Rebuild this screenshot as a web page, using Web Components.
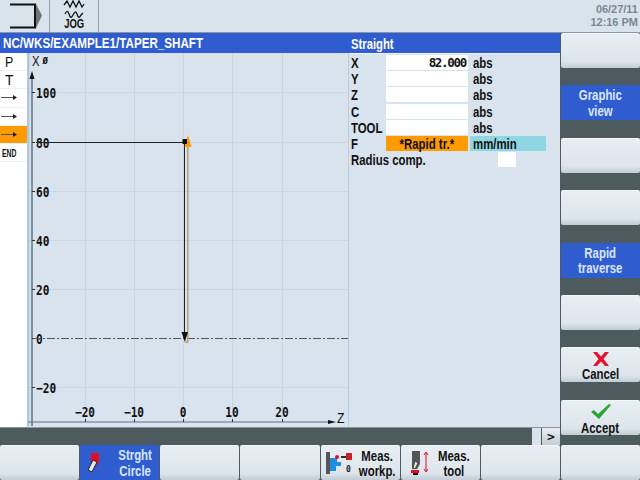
<!DOCTYPE html>
<html>
<head>
<meta charset="utf-8">
<style>
  html, body { margin: 0; padding: 0; width: 640px; height: 480px; overflow: hidden; background: #4d5a5e; }
  body { font: bold 15px "Liberation Sans", sans-serif; color: #111; }
</style>
</head>
<body>
<hmi-screen>
  <hmi-header slot="header"></hmi-header>
  <span slot="title">NC/WKS/EXAMPLE1/TAPER_SHAFT</span>
  <span slot="formtitle">Straight</span>
  <program-list slot="list"></program-list>
  <path-graph slot="graph"></path-graph>
  <straight-form slot="form"></straight-form>

  <soft-key slot="side"></soft-key>
  <soft-key slot="side" active>Graphic<br>view</soft-key>
  <soft-key slot="side"></soft-key>
  <soft-key slot="side"></soft-key>
  <soft-key slot="side" active>Rapid<br>traverse</soft-key>
  <soft-key slot="side"></soft-key>
  <soft-key slot="side" stacked style="--pt:4px;--g:1px">
    <svg slot="icon" width="16" height="14" viewBox="0 0 16 14"><path d="M0 0h4l4 4.500L12 0h4l-5.500 7L16 14h-4L8 9.500 4 14H0l5.500-7z" fill="#e8112d"/></svg>
    Cancel
  </soft-key>
  <soft-key slot="side" stacked style="--pt:3px;--g:2px">
    <svg slot="icon" width="20" height="15" viewBox="0 0 20 15"><path d="M0 8l3-2 4 4L18 0l2 1L8 15z" fill="#27a832"/></svg>
    Accept
  </soft-key>

  <soft-key slot="bottom"></soft-key>
  <soft-key slot="bottom" active iconed style="--pl:8px;--g:13px">
    <svg slot="icon" width="12" height="20" viewBox="0 0 12 20"><path d="M3 0h8v9l-2 3H3z" fill="#e01020"/><path d="M5 7l4 2-5 10-4-2z" fill="#e8e8e8" stroke="#222"/></svg>
    Strght<br>Circle
  </soft-key>
  <soft-key slot="bottom"></soft-key>
  <soft-key slot="bottom"></soft-key>
  <soft-key slot="bottom" iconed style="--pl:5px;--g:-5px">
    <svg slot="icon" width="27" height="24" viewBox="0 0 27 24"><rect x="0" y="1" width="4" height="22" fill="#555"/><path d="M4 7h7v4h4v4h-5v5H4z" fill="#1e8fe0"/><circle cx="11" cy="6" r="2" fill="#e01020"/><rect x="15" y="5" width="5" height="2" fill="#333"/><rect x="20" y="2" width="6" height="7" fill="#c8202a"/><text x="20" y="21" font-size="8" font-family="DejaVu Sans Mono" fill="#222">0</text></svg>
    Meas.<br>workp.
  </soft-key>
  <soft-key slot="bottom" iconed style="--pl:9px;--g:1px">
    <svg slot="icon" width="22" height="26" viewBox="0 0 22 26"><path d="M2 1h8v13l-3 5H2z" fill="#555"/><path d="M5 11l3 2-3 6-2-1z" fill="#e8e8e8" stroke="#222" stroke-width=".7"/><rect x="1" y="20" width="8" height="3" fill="#e01020"/><rect x="3" y="23" width="5" height="2" fill="#111"/><path d="M16 3v18M14 5l2-3 2 3M14 19l2 3 2-3" fill="none" stroke="#e01020"/></svg>
    Meas.<br>tool
  </soft-key>
  <soft-key slot="bottom"></soft-key>
  <soft-key slot="bottom"></soft-key>
</hmi-screen>

<script>
const defineEl = (name, css, html, onConnect) => {
  customElements.define(name, class extends HTMLElement {
    connectedCallback() {
      if (this.shadowRoot) return;
      const shadow = this.attachShadow({ mode: 'open' });
      shadow.innerHTML = `<style>${css}</style>${html}`;
      if (onConnect) onConnect(shadow, this);
    }
  });
};

// the HMI font is a condensed one; no narrow family here, so squeeze Liberation Sans
defineEl('n-t', `
  :host { display: inline-block; white-space: nowrap; transform: scaleX(.76); transform-origin: left center; }
`, `<slot></slot>`);

defineEl('hmi-screen', `
  :host { display: grid; width: 640px; height: 480px; grid-template-rows: 33px 394px 18px 35px;
          grid-template-columns: 560px 80px; background: #4d5a5e; }
  .head { grid-column: 1 / 3; }
  .main { display: grid; grid-template-rows: 20px 1fr; grid-template-columns: 348px 212px; background: #d9e3ee; }
  .bar { background: #2f5dd0; color: #fff; display: flex; align-items: center; font-size: 15.500px; padding-left: 3px;
         border-bottom: 1px solid #eef3f8; box-sizing: border-box; height: 21px; }
  .bar n-t { transform: scaleX(.75); }
  .bar.r { font-size: 15px; }
  .body { display: grid; grid-template-columns: 28px 320px; min-height: 0; }
  .side { grid-row: 2 / 4; grid-column: 2; display: flex; flex-direction: column; gap: 17.400px; padding: 0 0 0 1px;
          background: #4d5a5e; }
  .side ::slotted(soft-key) { height: 35px; flex: none; }
  .hbar { background: #4d5a5e; border-top: 1px solid #8b979c; box-sizing: border-box; display: flex; justify-content: flex-end; gap: 1px; }
  .s1 { width: 9px; background: #d9e3ee; }
  .s2 { width: 18px; background: linear-gradient(#e8eef3, #c3cdd5); display: flex; align-items: center; justify-content: center; font: bold 13px "DejaVu Sans Mono", monospace; }
  .foot { grid-column: 1 / 3; display: grid; grid-template-columns: repeat(8, 1fr); gap: 1px; }
`, `
  <div class="head"><slot name="header"></slot></div>
  <div class="main">
    <div class="bar"><n-t><slot name="title"></slot></n-t></div>
    <div class="bar r"><n-t><slot name="formtitle"></slot></n-t></div>
    <div class="body"><slot name="list"></slot><slot name="graph"></slot></div>
    <slot name="form"></slot>
  </div>
  <div class="side"><slot name="side"></slot></div>
  <div class="hbar"><div class="s1"></div><div class="s2">&gt;</div></div>
  <div class="foot"><slot name="bottom"></slot></div>
`);

defineEl('hmi-header', `
  :host { display: flex; height: 33px; background: #d9e3ec; box-sizing: border-box; border-bottom: 1px solid #8b979c; }
  .cell { width: 49px; flex: none; border-right: 1px solid #98a4ac; display: flex; flex-direction: column; align-items: center; }
  .cell + .cell { width: 48px; }
  .jog { font: bold 12.500px/11px "Liberation Sans", sans-serif; color: #111; transform-origin: center; margin-top: -1px; }
  .date { margin-left: auto; padding: 3px 2px 0 0; text-align: right; color: #7c8790; font: bold 11.500px/13.300px "Liberation Sans", sans-serif; }
  .date n-t { transform: scaleX(.95); transform-origin: right center; display: block; }
`, `
  <div class="cell">
    <svg width="49" height="32" viewBox="0 0 49 32">
      <path d="M36 4l6 11.500-6 12.500z" fill="#6c767e"/>
      <path d="M10 4.500H35V27.500H10" fill="none" stroke="#111" stroke-width="2"/>
    </svg>
  </div>
  <div class="cell">
    <svg width="22" height="20" viewBox="0 0 22 20">
      <path d="M1 5l3-4 3 6 3-6 3 6 3-6 3 6 2-3M2 14c2-4 3-3 4 0s2 5 4 1 3-4 4-1 2 5 4 1l2-2" fill="none" stroke="#111" stroke-width="1.300"/>
    </svg>
    <n-t class="jog">JOG</n-t>
  </div>
  <div class="date"><n-t>06/27/11</n-t><n-t>12:16 PM</n-t></div>
`);

defineEl('program-list', `
  :host { display: flex; flex-direction: column; background: #fff; width: 27px; border-right: 1px solid #b6cbe0; box-sizing: content-box; }
  .row { height: 18.200px; display: flex; align-items: center; padding-left: 5px; font: 15.500px "Liberation Sans", sans-serif; border-bottom: 1px solid #eef1f4; box-sizing: border-box; }
  .on { background: #ff9a00; }
  .end { font: bold 11px "Liberation Sans", sans-serif; padding-left: 2px; }
  .end n-t { transform: scaleX(.62); }
  .arr { padding-left: 1px; }
`, `
  <div class="row"><n-t style="transform:scaleX(.8)">P</n-t></div><div class="row"><n-t style="transform:scaleX(.9)">T</n-t></div>
  <div class="row arr"><svg width="16" height="7"><path d="M0 3.500h12" stroke="#555"/><path d="M12 1l4 2.500-4 2.500z" fill="#222"/></svg></div>
  <div class="row arr"><svg width="16" height="7"><path d="M0 3.500h12" stroke="#555"/><path d="M12 1l4 2.500-4 2.500z" fill="#222"/></svg></div>
  <div class="row arr on"><svg width="16" height="7"><path d="M0 3.500h12" stroke="#555"/><path d="M12 1l4 2.500-4 2.500z" fill="#222"/></svg></div>
  <div class="row end"><n-t>END</n-t></div>
`);

// graph origin: x=183 / y=339 page px, 4.9 px per unit on both axes
defineEl('path-graph', `
  :host { display: block; width: 320px; height: 373px; background: #d9e3ee; }
  svg { display: block; }
  text { font: bold 13.500px "DejaVu Sans Mono", monospace; fill: #111; }
`, `<svg width="320" height="373" viewBox="28 54 320 373"></svg>`, (shadow) => {
  const svg = shadow.querySelector('svg');
  let out = '';
  for (const x of [85, 134, 183, 232, 282]) out += `<path d="M${x + .5} 54V423" stroke="#c9d5e0"/>`;
  for (const y of [93, 143, 192, 241, 290, 388]) out += `<path d="M29 ${y + .5}H348" stroke="#c9d5e0"/>`;
  const lbl = (s, x, y, n) => `<text x="${x}" y="${y}" textLength="${n * 6.700}" lengthAdjust="spacingAndGlyphs">${s}</text>`;
  out += `<path d="M28.500 54V427" stroke="#a9c0d8" stroke-width="1.500"/><path d="M32 78V427" stroke="#5c7386" stroke-width="1.500"/><path d="M32 72l-2.500 8h5z" fill="#111"/>`;
  out += `<path d="M28 423H330" stroke="#5c7386" stroke-width="1.200"/><path d="M336 423l-8-2v4z" fill="#111"/>`;
  for (const x of [85, 134, 183, 232, 282]) out += `<path d="M${x + .5} 420V423" stroke="#333"/>`;
  for (const y of [93, 143, 192, 241, 290, 339, 388]) out += `<path d="M32 ${y + .5}H35" stroke="#333"/>`;
  out += `<text x="32" y="67" textLength="7.500" lengthAdjust="spacingAndGlyphs" style="font:15px 'Liberation Sans',sans-serif">X</text><text x="42.500" y="65" style="font:bold 9px 'DejaVu Sans Mono',monospace">Ø</text>`;
  out += `<text x="337" y="424" textLength="7.500" lengthAdjust="spacingAndGlyphs" style="font:15px 'Liberation Sans',sans-serif">Z</text>`;
  [[100, 93], [80, 143], [60, 192], [40, 241], [20, 290], [0, 339], [-20, 388]].forEach(([v, y]) => {
    const s = v < 0 ? '−20' : String(v);
    out += lbl(s, 36, y + 5.500, s.length);
  });
  [[-20, 85], [-10, 134], [0, 183], [10, 232], [20, 282]].forEach(([v, x]) => {
    const s = v < 0 ? '−' + -v : String(v);
    out += lbl(s, x - s.length * 3.350, 417.500, s.length);
  });
  out += `<path d="M33 339.500H348" stroke="#555" stroke-dasharray="8 2 2 2"/>`;
  out += `<path d="M187.750 143V343.250H185" fill="none" stroke="#b9a075" stroke-width="1.500"/>`;
  out += `<path d="M36 143.500H184.500V338" fill="none" stroke="#222"/>`;
  out += `<path d="M181.500 333h6.500l-3.200 10z" fill="#111"/>`;
  out += `<path d="M188 136l3.500 12h-7z" fill="#ff9a00"/><rect x="182.500" y="140" width="4.500" height="5" fill="#111"/>`;
  svg.innerHTML = out;
});

defineEl('straight-form', `
  :host { display: grid; grid-template-columns: 35px 82px 78px; grid-auto-rows: 16.200px; align-content: start; padding: 2px 0 0 2px;
          border-left: 1px solid #b6cbe0; font: bold 15px/16px "Liberation Sans", sans-serif; box-sizing: border-box; }
  .i { background: #fff; height: 15px; text-align: right; padding-right: 2px; box-sizing: border-box; }
  .u { padding-left: 5px; }
  .val { font: bold 12.500px/15px "DejaVu Sans Mono", monospace; letter-spacing: -1.300px; }
  .o { background: #ff9a00; text-align: center; padding: 0; line-height: 15px; }
  .o n-t { transform-origin: center; }
  .c { background: #8ed6e2; margin-left: 2px; padding-left: 3px; height: 15px; line-height: 15px; }
  .r { grid-column: 1 / 3; white-space: nowrap; }
  .cb { width: 18px; height: 15px; background: #fff; margin-left: 30px; }
`, `
  <div><n-t>X</n-t></div><div class="i val">82.000</div><div class="u"><n-t>abs</n-t></div>
  <div><n-t>Y</n-t></div><div class="i"></div><div class="u"><n-t>abs</n-t></div>
  <div><n-t>Z</n-t></div><div class="i"></div><div class="u"><n-t>abs</n-t></div>
  <div><n-t>C</n-t></div><div class="i"></div><div class="u"><n-t>abs</n-t></div>
  <div><n-t>TOOL</n-t></div><div class="i"></div><div class="u"><n-t>abs</n-t></div>
  <div><n-t>F</n-t></div><div class="i o"><n-t>*Rapid tr.*</n-t></div><div class="c"><n-t>mm/min</n-t></div>
  <div class="r"><n-t>Radius comp.</n-t></div><div><div class="cb"></div></div>
`);

defineEl('soft-key', `
  :host { display: flex; box-sizing: border-box; align-items: center; justify-content: center; gap: 8px; text-align: center; min-width: 0;
          background: linear-gradient(#e8eef3 0, #dde5ec 80%, #c2ccd4 100%); color: #111; border-radius: 2px;
          border-top: 1px solid #f2f6f9; font: bold 15px/15.500px "Liberation Sans", sans-serif; }
  :host([active]) { background: #2f5dd0; color: #dbe6ff; border-top: 0; border-radius: 0; }
  :host([stacked]) { flex-direction: column; justify-content: flex-start; padding-top: var(--pt); gap: var(--g); line-height: 14px; }
  :host([iconed]) { justify-content: flex-start; padding-left: var(--pl); gap: var(--g); }
  ::slotted(svg) { flex: none; }
  .t { display: block; flex: none; white-space: nowrap; transform: scaleX(.76); transform-origin: center; }
`, `<slot name="icon"></slot><span class="t"><slot></slot></span>`);
</script>
</body>
</html>
